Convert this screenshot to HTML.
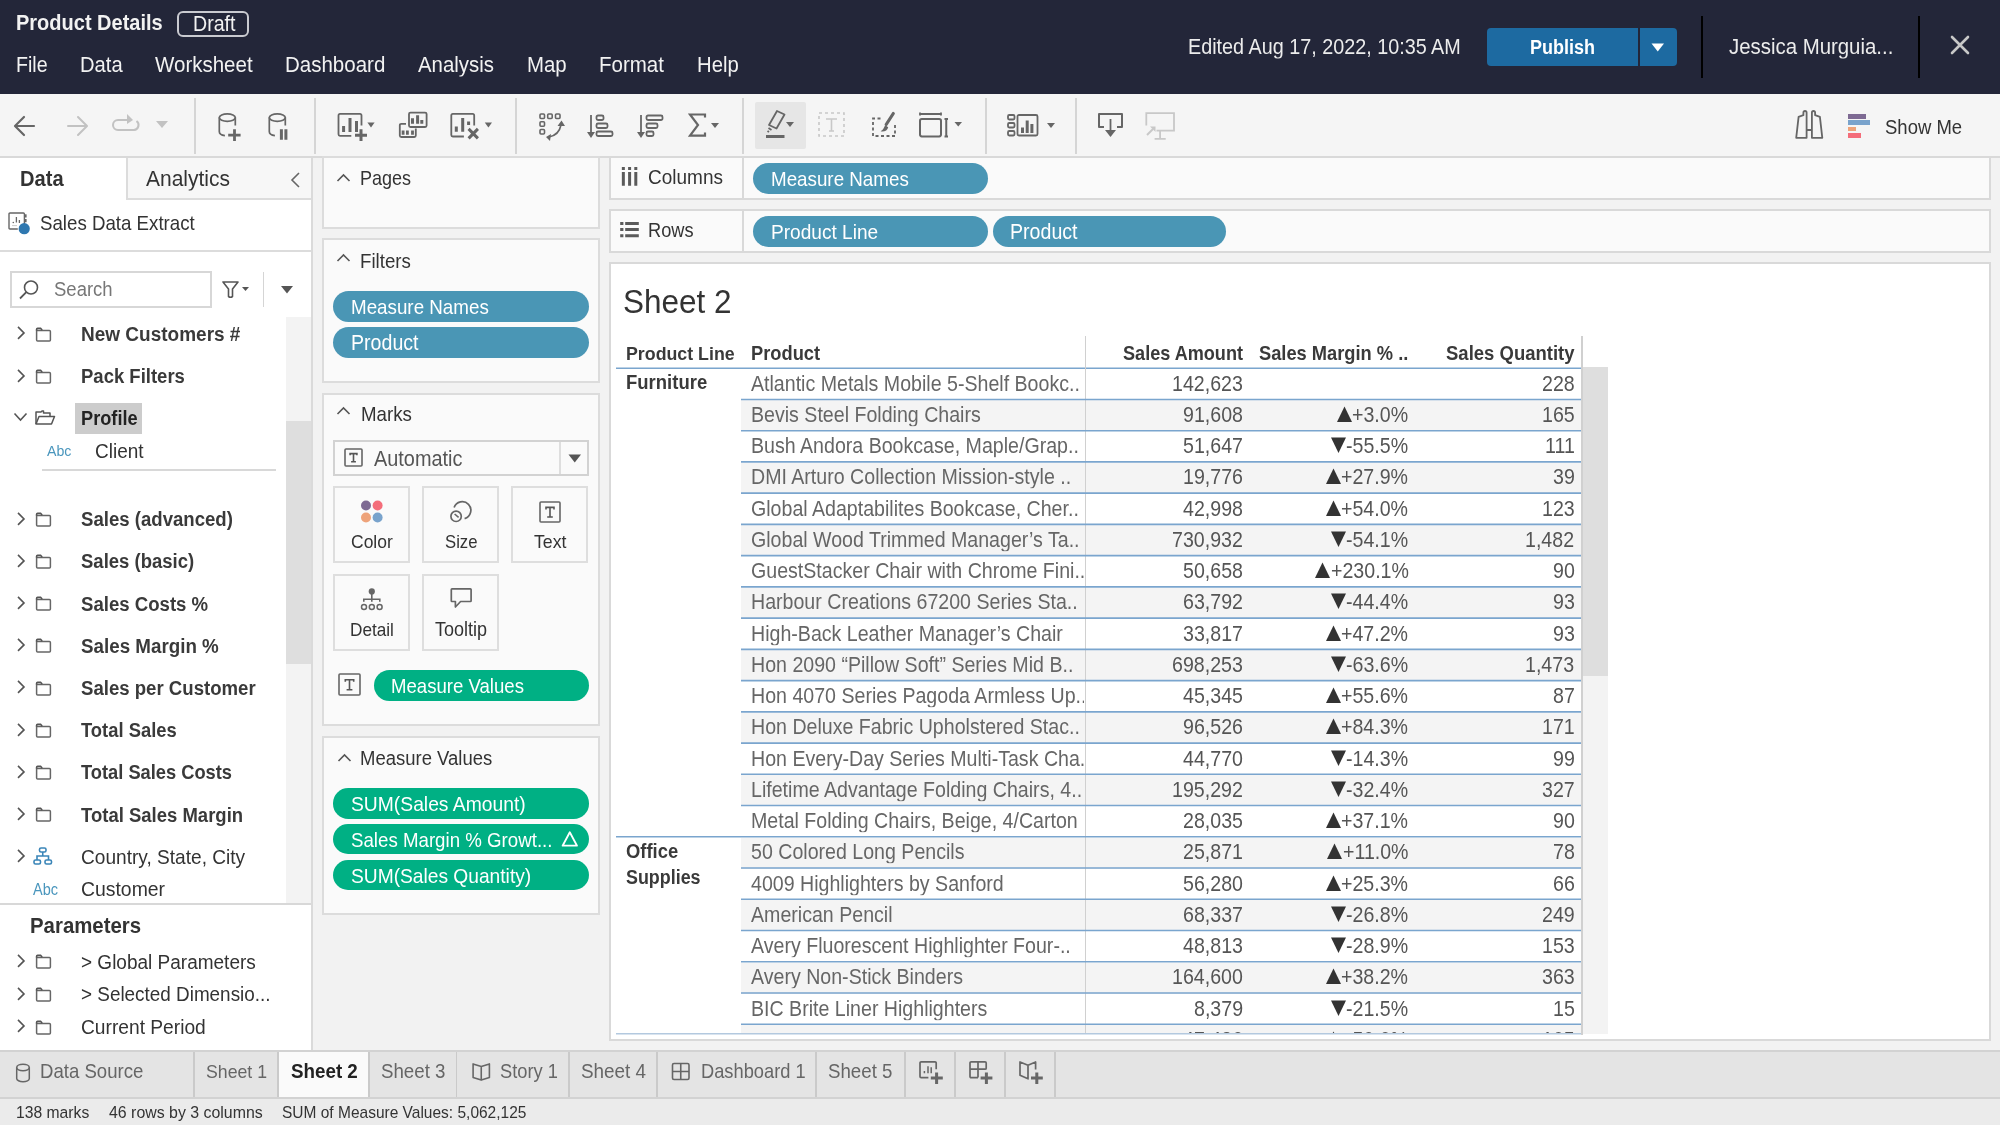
<!DOCTYPE html><html><head><meta charset="utf-8"><style>
html,body{margin:0;padding:0;}
body{width:2000px;height:1125px;overflow:hidden;position:relative;background:#f2f2f2;font-family:"Liberation Sans",sans-serif;}
.t{position:absolute;white-space:nowrap;line-height:1;will-change:transform;}
.r{position:absolute;}
</style></head><body>
<div class="r" style="left:0px;top:0px;width:2000px;height:94px;background:#232639;"></div>
<div class="t" style="top:13px;font-size:20.00px;color:#f2f2f2;transform:scaleY(1.08);transform-origin:0 16.93px;font-weight:700;left:16.00px;">Product Details</div>
<div class="r" style="left:177px;top:11px;width:72px;height:26px;border:2px solid #c9cad0;box-sizing:border-box;border-radius:6px;"></div>
<div class="t" style="top:15px;font-size:19.60px;color:#f2f2f2;transform:scaleY(1.08);transform-origin:0 16.60px;left:192.50px;">Draft</div>
<div class="t" style="top:56px;font-size:19.60px;color:#f2f2f2;transform:scaleY(1.08);transform-origin:0 16.60px;left:16.00px;">File</div>
<div class="t" style="top:55px;font-size:20.20px;color:#f2f2f2;transform:scaleY(1.08);transform-origin:0 17.10px;left:80.00px;">Data</div>
<div class="t" style="top:55px;font-size:20.50px;color:#f2f2f2;transform:scaleY(1.08);transform-origin:0 17.36px;left:155.00px;">Worksheet</div>
<div class="t" style="top:55px;font-size:20.50px;color:#f2f2f2;transform:scaleY(1.08);transform-origin:0 17.36px;left:285.30px;">Dashboard</div>
<div class="t" style="top:55px;font-size:20.40px;color:#f2f2f2;transform:scaleY(1.08);transform-origin:0 17.27px;left:418.00px;">Analysis</div>
<div class="t" style="top:55px;font-size:20.40px;color:#f2f2f2;transform:scaleY(1.08);transform-origin:0 17.27px;left:527.00px;">Map</div>
<div class="t" style="top:55px;font-size:20.50px;color:#f2f2f2;transform:scaleY(1.08);transform-origin:0 17.36px;left:599.00px;">Format</div>
<div class="t" style="top:55px;font-size:20.30px;color:#f2f2f2;transform:scaleY(1.08);transform-origin:0 17.19px;left:696.60px;">Help</div>
<div class="t" style="top:38px;font-size:19.80px;color:#ececec;transform:scaleY(1.08);transform-origin:0 16.76px;left:1188.00px;">Edited Aug 17, 2022, 10:35 AM</div>
<div class="r" style="left:1487px;top:28px;width:190px;height:38px;background:#1d6aa1;border-radius:4px;"></div>
<div class="r" style="left:1638px;top:28px;width:2px;height:38px;background:#232639;"></div>
<div class="t" style="top:39px;font-size:18.00px;color:#ffffff;transform:scaleY(1.08);transform-origin:0 15.24px;font-weight:700;left:1530.00px;">Publish</div>
<svg class="r" style="left:1651px;top:43px;" width="14" height="9" viewBox="0 0 14 9"><path d="M0.5 0.5 H13 L6.75 8.5 Z" fill="#fff"/></svg>
<div class="r" style="left:1701px;top:16px;width:2px;height:62px;background:#000;"></div>
<div class="t" style="top:37px;font-size:20.40px;color:#ececec;transform:scaleY(1.08);transform-origin:0 17.27px;left:1728.50px;">Jessica Murguia...</div>
<div class="r" style="left:1918px;top:16px;width:2px;height:62px;background:#000;"></div>
<svg class="r" style="left:1949px;top:34px;" width="22" height="22" viewBox="0 0 22 22"><path d="M3 3 L19 19 M19 3 L3 19" stroke="#c8c8c8" stroke-width="2.6" stroke-linecap="round"/></svg>
<div class="r" style="left:0px;top:94px;width:2000px;height:63px;background:#f5f5f5;"></div>
<div class="r" style="left:0px;top:156px;width:2000px;height:2px;background:#d9d9d9;"></div>
<div class="r" style="left:194px;top:98px;width:2px;height:56px;background:#d5d5d5;"></div>
<div class="r" style="left:314px;top:98px;width:2px;height:56px;background:#d5d5d5;"></div>
<div class="r" style="left:515px;top:98px;width:2px;height:56px;background:#d5d5d5;"></div>
<div class="r" style="left:742px;top:98px;width:2px;height:56px;background:#d5d5d5;"></div>
<div class="r" style="left:985px;top:98px;width:2px;height:56px;background:#d5d5d5;"></div>
<div class="r" style="left:1075px;top:98px;width:2px;height:56px;background:#d5d5d5;"></div>
<svg class="r" style="left:12px;top:114px;" width="26" height="24" viewBox="0 0 26 24"><path d="M4 12 H22 M12 3 L3 12 L12 21" stroke="#666" stroke-width="2.2" fill="none" stroke-linecap="round" stroke-linejoin="round"/></svg>
<svg class="r" style="left:64px;top:114px;" width="26" height="24" viewBox="0 0 26 24"><path d="M4 12 H22 M14 3 L23 12 L14 21" stroke="#c2c2c2" stroke-width="2" fill="none" stroke-linecap="round" stroke-linejoin="round"/></svg>
<svg class="r" style="left:109px;top:113px;" width="32" height="22" viewBox="0 0 32 22"><path d="M18 7 H9 A5 5 0 0 0 9 17 H25 A5 5 0 0 0 27.5 8" stroke="#c2c2c2" stroke-width="2" fill="none"/><path d="M18 1 L24 7 L18 11 Z" fill="#c2c2c2"/></svg>
<svg class="r" style="left:156px;top:121px;" width="12" height="7" viewBox="0 0 12 7"><path d="M0 0 H12 L6.0 7 Z" fill="#c2c2c2"/></svg>
<svg class="r" style="left:217px;top:112px;" width="26" height="30" viewBox="0 0 26 30"><ellipse cx="10.3" cy="5.6" rx="8" ry="3.7" fill="none" stroke="#666" stroke-width="1.7"/><path d="M2.3 5.6 V19.5 Q2.3 23 7.9 23.6 M18.3 5.6 V13.5" fill="none" stroke="#666" stroke-width="1.7"/><path d="M17.5 17.3 V29 M11.2 23.2 H23.6" stroke="#666" stroke-width="2.8"/></svg>
<svg class="r" style="left:267px;top:112px;" width="24" height="30" viewBox="0 0 24 30"><ellipse cx="10.3" cy="5.6" rx="8" ry="3.7" fill="none" stroke="#666" stroke-width="1.7"/><path d="M2.3 5.6 V19.5 Q2.3 23 7.9 23.6 M18.3 5.6 V13.5" fill="none" stroke="#666" stroke-width="1.7"/><path d="M14.4 17.3 V27.7 M18.9 17.3 V27.7" stroke="#666" stroke-width="3"/></svg>
<svg class="r" style="left:336px;top:112px;" width="42" height="30" viewBox="0 0 42 30"><path d="M25.5 13.4 V3.4 Q25.5 1.9 24 1.9 H4 Q2.5 1.9 2.5 3.4 V22.3 Q2.5 23.8 4 23.8 H15.3" fill="none" stroke="#666" stroke-width="1.8"/><path d="M7.6 20 V14 M14 20 V6 M20.5 20 V9" stroke="#666" stroke-width="3"/><path d="M25 17.2 V29.1 M19 23.2 H31" stroke="#666" stroke-width="3"/><path d="M31.4 10.4 H38.6 L35 15.5 Z" fill="#666"/></svg>
<svg class="r" style="left:397px;top:111px;" width="32" height="28" viewBox="0 0 32 28"><rect x="12" y="1.6" width="17.6" height="14.4" rx="1.5" fill="none" stroke="#666" stroke-width="1.8"/><path d="M15.5 12.7 V7.2 M20.6 12.7 V4.2 M24.8 12.7 V8.9" stroke="#666" stroke-width="3"/><path d="M9 12.8 H4.3 Q2.8 12.8 2.8 14.3 V24.5 Q2.8 26 4.3 26 H17.3 Q18.8 26 18.8 24.5 V17.5" fill="none" stroke="#666" stroke-width="1.8"/><path d="M6.1 23.8 V19.5 M10.4 23.8 V19.5 M15.5 23.8 V19.5" stroke="#666" stroke-width="2.8"/></svg>
<svg class="r" style="left:449px;top:112px;" width="44" height="30" viewBox="0 0 44 30"><path d="M25.2 13.4 V3.4 Q25.2 1.9 23.7 1.9 H3.8 Q2.3 1.9 2.3 3.4 V23 Q2.3 24.5 3.8 24.5 H14.9" fill="none" stroke="#666" stroke-width="1.8"/><path d="M7.3 19.8 V14.4 M13.7 19.8 V6 M19.6 13 V9.4" stroke="#666" stroke-width="3"/><path d="M19.6 16.9 L28.9 26.4 M28.9 16.9 L19.6 26.4" stroke="#666" stroke-width="3"/><path d="M35.8 10.4 H43 L39.4 15.5 Z" fill="#666"/></svg>
<svg class="r" style="left:539px;top:113px;" width="28" height="29" viewBox="0 0 28 29"><g fill="none" stroke="#666" stroke-width="1.6"><rect x="1" y="1" width="4.5" height="4.5" rx="1"/><rect x="8.7" y="1" width="4.5" height="4.5" rx="1"/><rect x="16.5" y="1" width="4.5" height="4.5" rx="1"/><rect x="1" y="8.8" width="4.5" height="4.5" rx="1"/><rect x="1" y="16.5" width="4.5" height="4.5" rx="1"/><path d="M10 24 Q20 22 22 12"/></g><path d="M18.5 13 L22.5 7.5 L26 13 Z M12 21 L7 24 L11 28 Z" fill="#666"/></svg>
<svg class="r" style="left:586px;top:114px;" width="30" height="26" viewBox="0 0 30 26"><path d="M5 1 V20" stroke="#666" stroke-width="1.8"/><path d="M1 18 H9 L5 24 Z" fill="#666"/><g fill="none" stroke="#666" stroke-width="1.8"><rect x="10.5" y="1.5" width="7" height="4.5" rx="1.5"/><rect x="10.5" y="9.5" width="11" height="4.5" rx="1.5"/><rect x="10.5" y="17.5" width="16" height="4.5" rx="1.5"/></g></svg>
<svg class="r" style="left:636px;top:114px;" width="30" height="26" viewBox="0 0 30 26"><path d="M5 1 V20" stroke="#666" stroke-width="1.8"/><path d="M1 18 H9 L5 24 Z" fill="#666"/><g fill="none" stroke="#666" stroke-width="1.8"><rect x="10.5" y="1.5" width="16" height="4.5" rx="1.5"/><rect x="10.5" y="9.5" width="11" height="4.5" rx="1.5"/><rect x="10.5" y="17.5" width="7" height="4.5" rx="1.5"/></g></svg>
<svg class="r" style="left:688px;top:112px;" width="32" height="27" viewBox="0 0 32 27"><path d="M17 5.5 V2.5 H2 L10 13 L2 23.6 H17 V20.6" fill="none" stroke="#666" stroke-width="2.2"/><path d="M23 11 H31 L27 16 Z" fill="#666"/></svg>
<div class="r" style="left:755px;top:102px;width:51px;height:47px;background:#e6e6e6;border-radius:2px;"></div>
<svg class="r" style="left:764px;top:109px;" width="32" height="31" viewBox="0 0 32 31"><path d="M12.5 19.5 L5 16 L13 2 L20.5 5.5 Z" fill="none" stroke="#666" stroke-width="1.8" stroke-linejoin="round"/><path d="M4.5 19 L7.5 21 M3.5 22 L5 23" stroke="#666" stroke-width="1.8"/><rect x="2" y="26" width="18.5" height="3" fill="#666"/><path d="M22 13 H30 L26 18 Z" fill="#666"/></svg>
<svg class="r" style="left:818px;top:112px;" width="28" height="26" viewBox="0 0 28 26"><rect x="1" y="1" width="25" height="23" fill="none" stroke="#c8c8c8" stroke-width="1.6" stroke-dasharray="3 3"/><path d="M8 7 H19 M13.5 7 V19 M11 19 H16" stroke="#c8c8c8" stroke-width="1.6" fill="none"/></svg>
<svg class="r" style="left:871px;top:111px;" width="26" height="28" viewBox="0 0 26 28"><path d="M9.5 7.5 H2 V25 H24 V12.5" fill="none" stroke="#666" stroke-width="1.8" stroke-dasharray="3 2.5"/><path d="M22.3 2.5 L15.2 13.5" stroke="#666" stroke-width="3.2" stroke-linecap="round"/><path d="M14.3 14.2 C12.8 16.2 12.6 18.6 9.6 20.2 C13 21 16.6 19.6 17.2 16.2 Z" fill="#666"/></svg>
<svg class="r" style="left:918px;top:110px;" width="46" height="29" viewBox="0 0 46 29"><path d="M2 2.5 V5.5 M2 4 H23 M23 2.5 V5.5" stroke="#666" stroke-width="1.8" fill="none"/><rect x="2" y="9" width="21" height="17.4" rx="1.8" fill="none" stroke="#666" stroke-width="2"/><path d="M26.5 9 H30 M28.25 9 V26.4 M26.5 26.4 H30" stroke="#666" stroke-width="2" fill="none"/><path d="M36.5 12 H44 L40.25 16.5 Z" fill="#666"/></svg>
<svg class="r" style="left:1007px;top:114px;" width="50" height="25" viewBox="0 0 50 25"><g fill="none" stroke="#666" stroke-width="1.8"><rect x="1" y="1" width="6.5" height="4.5" rx="1.2"/><rect x="1" y="9" width="6.5" height="4.5" rx="1.2"/><rect x="1" y="17" width="6.5" height="4.5" rx="1.2"/><rect x="10.5" y="1" width="20" height="20.5" rx="1.5"/></g><path d="M15.5 19V13.5 M20.2 19V6.5 M24.9 19V10" stroke="#666" stroke-width="3"/><path d="M40 9 H48 L44 14 Z" fill="#666"/></svg>
<svg class="r" style="left:1097px;top:112px;" width="27" height="27" viewBox="0 0 27 27"><path d="M7 15 H2 V2 H25 V15 H20" fill="none" stroke="#666" stroke-width="2" stroke-linejoin="round"/><path d="M13.5 7 V22" stroke="#666" stroke-width="1.8"/><path d="M8 18 H19 L13.5 25 Z" fill="#666"/></svg>
<svg class="r" style="left:1145px;top:111px;" width="32" height="31" viewBox="0 0 32 31"><path d="M1.3 14.4 V2.1 H29 V19.6 H11.5" fill="none" stroke="#c8c8c8" stroke-width="1.8"/><path d="M15.1 19.6 V27.9 M9.6 27.9 H20.7" fill="none" stroke="#c8c8c8" stroke-width="1.8"/><path d="M2 24 L8 18" stroke="#c8c8c8" stroke-width="2"/><path d="M5 15.5 H10.5 V21 Z" fill="#c8c8c8"/></svg>
<svg class="r" style="left:1794px;top:110px;" width="31" height="31" viewBox="0 0 31 31"><path d="M2.2 27.8 L4.6 6.8 L9.4 5.2 V2.6 Q9.4 1 11 1 Q12.6 1 12.6 2.6 V27.8 Z M28.3 27.8 L25.9 6.8 L21.1 5.2 V2.6 Q21.1 1 19.5 1 Q17.9 1 17.9 2.6 V27.8 Z M12.6 20 H17.9" fill="none" stroke="#666" stroke-width="1.8" stroke-linejoin="round"/></svg>
<div class="r" style="left:1848px;top:114px;width:18px;height:5px;background:#7e6a93;"></div>
<div class="r" style="left:1848px;top:120px;width:22px;height:5px;background:#79a3cc;"></div>
<div class="r" style="left:1848px;top:127px;width:8px;height:4px;background:#eea37a;"></div>
<div class="r" style="left:1848px;top:133px;width:13px;height:5px;background:#f46d7a;"></div>
<div class="t" style="top:119px;font-size:18.50px;color:#333;transform:scaleY(1.08);transform-origin:0 15.66px;left:1885.00px;">Show Me</div>
<div class="r" style="left:0px;top:158px;width:311px;height:892px;background:#ffffff;"></div>
<div class="r" style="left:311px;top:158px;width:2px;height:892px;background:#dadada;"></div>
<div class="r" style="left:126px;top:158px;width:185px;height:42px;background:#f7f7f7;"></div>
<div class="r" style="left:126px;top:158px;width:2px;height:42px;background:#dcdcdc;"></div>
<div class="r" style="left:126px;top:198px;width:185px;height:2px;background:#dcdcdc;"></div>
<div class="t" style="top:169px;font-size:20.10px;color:#333;transform:scaleY(1.08);transform-origin:0 17.02px;font-weight:700;left:19.80px;">Data</div>
<div class="t" style="top:168px;font-size:21.00px;color:#333;transform:scaleY(1.08);transform-origin:0 17.78px;left:146.00px;">Analytics</div>
<svg class="r" style="left:289px;top:171px;" width="12" height="18" viewBox="0 0 12 18"><path d="M10 2 L3 9 L10 16" fill="none" stroke="#666" stroke-width="1.6"/></svg>
<svg class="r" style="left:7px;top:211px;" width="26" height="26" viewBox="0 0 26 26"><path d="M10.8 18 H3 Q2 18 2 17 V3 Q2 2 3 2 H16.4 Q17.4 2 17.4 3 V13" fill="none" stroke="#666" stroke-width="1.4"/><rect x="17.2" y="3.3" width="2.4" height="3.2" fill="#666"/><rect x="17.2" y="8" width="2.4" height="3.2" fill="#666"/><circle cx="6.3" cy="11.5" r="0.8" fill="#666"/><path d="M9.4 6 V11.6 M12.4 9 V12" stroke="#666" stroke-width="1.3"/><path d="M5 14.6 H10" stroke="#ccc" stroke-width="1"/><circle cx="17.2" cy="17.7" r="5.6" fill="#2f78b0"/></svg>
<div class="t" style="top:215px;font-size:18.70px;color:#333;transform:scaleY(1.08);transform-origin:0 15.83px;left:40.00px;">Sales Data Extract</div>
<div class="r" style="left:0px;top:250px;width:311px;height:2px;background:#dcdcdc;"></div>
<div class="r" style="left:10px;top:271px;width:202px;height:37px;background:#fff;border:2px solid #d7d7d7;box-sizing:border-box;"></div>
<svg class="r" style="left:18px;top:279px;" width="22" height="22" viewBox="0 0 22 22"><circle cx="13" cy="8.5" r="6.5" fill="none" stroke="#555" stroke-width="1.6"/><path d="M8.3 13.2 L2 19.5" stroke="#555" stroke-width="1.8"/></svg>
<div class="t" style="top:281px;font-size:18.50px;color:#777;transform:scaleY(1.08);transform-origin:0 15.66px;left:54.00px;">Search</div>
<svg class="r" style="left:221px;top:280px;" width="30" height="19" viewBox="0 0 30 19"><path d="M2 2 H17 L11.5 9 V16.5 Q9.5 18 7.5 16.5 V9 Z" fill="none" stroke="#555" stroke-width="1.6" stroke-linejoin="round"/><path d="M21 7 H28 L24.5 11 Z" fill="#555"/></svg>
<div class="r" style="left:262.5px;top:272px;width:1.5px;height:35px;background:#d5d5d5;"></div>
<svg class="r" style="left:281px;top:286px;" width="13" height="8" viewBox="0 0 13 8"><path d="M0 0 H12 L6 7.5 Z" fill="#555"/></svg>
<div class="r" style="left:286px;top:317px;width:25px;height:586px;background:#f3f3f3;"></div>
<div class="r" style="left:286px;top:421px;width:25px;height:243px;background:#dedede;"></div>
<svg class="r" style="left:16px;top:326.3px;" width="11" height="16" viewBox="0 0 11 16"><path d="M2 0.9 L8 6.9 L2 12.9" fill="none" stroke="#555" stroke-width="1.6"/></svg>
<svg class="r" style="left:35px;top:326.5px;" width="18" height="16" viewBox="0 0 18 16"><path d="M1.6 3.4 V13 Q1.6 14 2.6 14 H14.4 Q15.4 14 15.4 13 V4.4 Q15.4 3.4 14.4 3.4 Z" fill="none" stroke="#666" stroke-width="1.5"/><path d="M1.6 3.4 V2.4 Q1.6 1.4 2.6 1.4 H5.6 L7.2 3" fill="none" stroke="#555" stroke-width="1.6"/></svg>
<div class="t" style="top:325px;font-size:19.00px;color:#3a3a3a;transform:scaleY(1.08);transform-origin:0 16.09px;font-weight:700;left:80.80px;">New Customers #</div>
<svg class="r" style="left:16px;top:368.6px;" width="11" height="16" viewBox="0 0 11 16"><path d="M2 0.9 L8 6.9 L2 12.9" fill="none" stroke="#555" stroke-width="1.6"/></svg>
<svg class="r" style="left:35px;top:368.8px;" width="18" height="16" viewBox="0 0 18 16"><path d="M1.6 3.4 V13 Q1.6 14 2.6 14 H14.4 Q15.4 14 15.4 13 V4.4 Q15.4 3.4 14.4 3.4 Z" fill="none" stroke="#666" stroke-width="1.5"/><path d="M1.6 3.4 V2.4 Q1.6 1.4 2.6 1.4 H5.6 L7.2 3" fill="none" stroke="#555" stroke-width="1.6"/></svg>
<div class="t" style="top:368px;font-size:18.50px;color:#3a3a3a;transform:scaleY(1.08);transform-origin:0 15.66px;font-weight:700;left:80.80px;">Pack Filters</div>
<svg class="r" style="left:13px;top:412px;" width="16" height="11" viewBox="0 0 16 11"><path d="M1.5 1.5 L7.5 8 L13.5 1.5" fill="none" stroke="#555" stroke-width="1.6"/></svg>
<svg class="r" style="left:35px;top:410px;" width="21" height="17" viewBox="0 0 21 17"><path d="M1 14 V2 H6 L7 1 H8.5 V3 H15 V6" fill="none" stroke="#555" stroke-width="1.5" stroke-linejoin="round"/><path d="M1 14 L4 6.5 H19.5 L16.5 14 Z" fill="none" stroke="#555" stroke-width="1.5" stroke-linejoin="round"/></svg>
<div class="r" style="left:75px;top:403px;width:67px;height:31px;background:#cccccc;"></div>
<div class="t" style="top:410px;font-size:18.20px;color:#222;transform:scaleY(1.08);transform-origin:0 15.41px;font-weight:700;left:80.80px;">Profile</div>
<div class="t" style="top:444px;font-size:14.20px;color:#4a96bd;transform:scaleY(1.08);transform-origin:0 12.02px;left:47.30px;">Abc</div>
<div class="t" style="top:442px;font-size:19.00px;color:#333;transform:scaleY(1.08);transform-origin:0 16.09px;left:94.70px;">Client</div>
<div class="r" style="left:42px;top:469px;width:234px;height:2px;background:#d8d8d8;"></div>
<svg class="r" style="left:16px;top:511.59999999999997px;" width="11" height="16" viewBox="0 0 11 16"><path d="M2 0.9 L8 6.9 L2 12.9" fill="none" stroke="#555" stroke-width="1.6"/></svg>
<svg class="r" style="left:35px;top:511.79999999999995px;" width="18" height="16" viewBox="0 0 18 16"><path d="M1.6 3.4 V13 Q1.6 14 2.6 14 H14.4 Q15.4 14 15.4 13 V4.4 Q15.4 3.4 14.4 3.4 Z" fill="none" stroke="#666" stroke-width="1.5"/><path d="M1.6 3.4 V2.4 Q1.6 1.4 2.6 1.4 H5.6 L7.2 3" fill="none" stroke="#555" stroke-width="1.6"/></svg>
<div class="t" style="top:511px;font-size:18.60px;color:#3a3a3a;transform:scaleY(1.08);transform-origin:0 15.75px;font-weight:700;left:80.80px;">Sales (advanced)</div>
<svg class="r" style="left:16px;top:553.8px;" width="11" height="16" viewBox="0 0 11 16"><path d="M2 0.9 L8 6.9 L2 12.9" fill="none" stroke="#555" stroke-width="1.6"/></svg>
<svg class="r" style="left:35px;top:554.0px;" width="18" height="16" viewBox="0 0 18 16"><path d="M1.6 3.4 V13 Q1.6 14 2.6 14 H14.4 Q15.4 14 15.4 13 V4.4 Q15.4 3.4 14.4 3.4 Z" fill="none" stroke="#666" stroke-width="1.5"/><path d="M1.6 3.4 V2.4 Q1.6 1.4 2.6 1.4 H5.6 L7.2 3" fill="none" stroke="#555" stroke-width="1.6"/></svg>
<div class="t" style="top:553px;font-size:18.50px;color:#3a3a3a;transform:scaleY(1.08);transform-origin:0 15.66px;font-weight:700;left:80.80px;">Sales (basic)</div>
<svg class="r" style="left:16px;top:596.0999999999999px;" width="11" height="16" viewBox="0 0 11 16"><path d="M2 0.9 L8 6.9 L2 12.9" fill="none" stroke="#555" stroke-width="1.6"/></svg>
<svg class="r" style="left:35px;top:596.3px;" width="18" height="16" viewBox="0 0 18 16"><path d="M1.6 3.4 V13 Q1.6 14 2.6 14 H14.4 Q15.4 14 15.4 13 V4.4 Q15.4 3.4 14.4 3.4 Z" fill="none" stroke="#666" stroke-width="1.5"/><path d="M1.6 3.4 V2.4 Q1.6 1.4 2.6 1.4 H5.6 L7.2 3" fill="none" stroke="#555" stroke-width="1.6"/></svg>
<div class="t" style="top:596px;font-size:18.60px;color:#3a3a3a;transform:scaleY(1.08);transform-origin:0 15.75px;font-weight:700;left:80.80px;">Sales Costs %</div>
<svg class="r" style="left:16px;top:638.0999999999999px;" width="11" height="16" viewBox="0 0 11 16"><path d="M2 0.9 L8 6.9 L2 12.9" fill="none" stroke="#555" stroke-width="1.6"/></svg>
<svg class="r" style="left:35px;top:638.3px;" width="18" height="16" viewBox="0 0 18 16"><path d="M1.6 3.4 V13 Q1.6 14 2.6 14 H14.4 Q15.4 14 15.4 13 V4.4 Q15.4 3.4 14.4 3.4 Z" fill="none" stroke="#666" stroke-width="1.5"/><path d="M1.6 3.4 V2.4 Q1.6 1.4 2.6 1.4 H5.6 L7.2 3" fill="none" stroke="#555" stroke-width="1.6"/></svg>
<div class="t" style="top:638px;font-size:18.80px;color:#3a3a3a;transform:scaleY(1.08);transform-origin:0 15.92px;font-weight:700;left:80.80px;">Sales Margin %</div>
<svg class="r" style="left:16px;top:680.3px;" width="11" height="16" viewBox="0 0 11 16"><path d="M2 0.9 L8 6.9 L2 12.9" fill="none" stroke="#555" stroke-width="1.6"/></svg>
<svg class="r" style="left:35px;top:680.5px;" width="18" height="16" viewBox="0 0 18 16"><path d="M1.6 3.4 V13 Q1.6 14 2.6 14 H14.4 Q15.4 14 15.4 13 V4.4 Q15.4 3.4 14.4 3.4 Z" fill="none" stroke="#666" stroke-width="1.5"/><path d="M1.6 3.4 V2.4 Q1.6 1.4 2.6 1.4 H5.6 L7.2 3" fill="none" stroke="#555" stroke-width="1.6"/></svg>
<div class="t" style="top:680px;font-size:18.60px;color:#3a3a3a;transform:scaleY(1.08);transform-origin:0 15.75px;font-weight:700;left:80.80px;">Sales per Customer</div>
<svg class="r" style="left:16px;top:722.5px;" width="11" height="16" viewBox="0 0 11 16"><path d="M2 0.9 L8 6.9 L2 12.9" fill="none" stroke="#555" stroke-width="1.6"/></svg>
<svg class="r" style="left:35px;top:722.7px;" width="18" height="16" viewBox="0 0 18 16"><path d="M1.6 3.4 V13 Q1.6 14 2.6 14 H14.4 Q15.4 14 15.4 13 V4.4 Q15.4 3.4 14.4 3.4 Z" fill="none" stroke="#666" stroke-width="1.5"/><path d="M1.6 3.4 V2.4 Q1.6 1.4 2.6 1.4 H5.6 L7.2 3" fill="none" stroke="#555" stroke-width="1.6"/></svg>
<div class="t" style="top:722px;font-size:18.40px;color:#3a3a3a;transform:scaleY(1.08);transform-origin:0 15.58px;font-weight:700;left:80.80px;">Total Sales</div>
<svg class="r" style="left:16px;top:764.6999999999999px;" width="11" height="16" viewBox="0 0 11 16"><path d="M2 0.9 L8 6.9 L2 12.9" fill="none" stroke="#555" stroke-width="1.6"/></svg>
<svg class="r" style="left:35px;top:764.9px;" width="18" height="16" viewBox="0 0 18 16"><path d="M1.6 3.4 V13 Q1.6 14 2.6 14 H14.4 Q15.4 14 15.4 13 V4.4 Q15.4 3.4 14.4 3.4 Z" fill="none" stroke="#666" stroke-width="1.5"/><path d="M1.6 3.4 V2.4 Q1.6 1.4 2.6 1.4 H5.6 L7.2 3" fill="none" stroke="#555" stroke-width="1.6"/></svg>
<div class="t" style="top:764px;font-size:18.30px;color:#3a3a3a;transform:scaleY(1.08);transform-origin:0 15.49px;font-weight:700;left:80.80px;">Total Sales Costs</div>
<svg class="r" style="left:16px;top:807.0px;" width="11" height="16" viewBox="0 0 11 16"><path d="M2 0.9 L8 6.9 L2 12.9" fill="none" stroke="#555" stroke-width="1.6"/></svg>
<svg class="r" style="left:35px;top:807.2px;" width="18" height="16" viewBox="0 0 18 16"><path d="M1.6 3.4 V13 Q1.6 14 2.6 14 H14.4 Q15.4 14 15.4 13 V4.4 Q15.4 3.4 14.4 3.4 Z" fill="none" stroke="#666" stroke-width="1.5"/><path d="M1.6 3.4 V2.4 Q1.6 1.4 2.6 1.4 H5.6 L7.2 3" fill="none" stroke="#555" stroke-width="1.6"/></svg>
<div class="t" style="top:807px;font-size:18.50px;color:#3a3a3a;transform:scaleY(1.08);transform-origin:0 15.66px;font-weight:700;left:80.80px;">Total Sales Margin</div>
<svg class="r" style="left:16px;top:849.1999999999999px;" width="11" height="16" viewBox="0 0 11 16"><path d="M2 0.9 L8 6.9 L2 12.9" fill="none" stroke="#555" stroke-width="1.6"/></svg>
<svg class="r" style="left:33px;top:846.9px;" width="20" height="19" viewBox="0 0 20 19"><g fill="none" stroke="#3a85b8" stroke-width="1.6"><rect x="6.5" y="1" width="6.5" height="4" rx="1.5"/><path d="M9.75 5 V9 M4 13 V9 H15.5 V13"/><rect x="1" y="13" width="6.5" height="4" rx="1.5"/><rect x="12" y="13" width="6.5" height="4" rx="1.5"/></g></svg>
<div class="t" style="top:848px;font-size:19.10px;color:#333;transform:scaleY(1.08);transform-origin:0 16.17px;left:80.80px;">Country, State, City</div>
<div class="t" style="top:883px;font-size:14.50px;color:#4a96bd;transform:scaleY(1.08);transform-origin:0 12.28px;left:33.00px;">Abc</div>
<div class="t" style="top:880px;font-size:19.40px;color:#333;transform:scaleY(1.08);transform-origin:0 16.43px;left:80.80px;">Customer</div>
<div class="r" style="left:0px;top:903px;width:311px;height:2px;background:#d8d8d8;"></div>
<div class="t" style="top:916px;font-size:20.40px;color:#333;transform:scaleY(1.08);transform-origin:0 17.27px;font-weight:700;left:29.50px;">Parameters</div>
<svg class="r" style="left:16px;top:954.0999999999999px;" width="11" height="16" viewBox="0 0 11 16"><path d="M2 0.9 L8 6.9 L2 12.9" fill="none" stroke="#555" stroke-width="1.6"/></svg>
<svg class="r" style="left:35px;top:954.3px;" width="18" height="16" viewBox="0 0 18 16"><path d="M1.6 3.4 V13 Q1.6 14 2.6 14 H14.4 Q15.4 14 15.4 13 V4.4 Q15.4 3.4 14.4 3.4 Z" fill="none" stroke="#666" stroke-width="1.5"/><path d="M1.6 3.4 V2.4 Q1.6 1.4 2.6 1.4 H5.6 L7.2 3" fill="none" stroke="#555" stroke-width="1.6"/></svg>
<div class="t" style="top:953px;font-size:19.00px;color:#333;transform:scaleY(1.08);transform-origin:0 16.09px;left:80.80px;">&gt; Global Parameters</div>
<svg class="r" style="left:16px;top:986.6999999999999px;" width="11" height="16" viewBox="0 0 11 16"><path d="M2 0.9 L8 6.9 L2 12.9" fill="none" stroke="#555" stroke-width="1.6"/></svg>
<svg class="r" style="left:35px;top:986.9px;" width="18" height="16" viewBox="0 0 18 16"><path d="M1.6 3.4 V13 Q1.6 14 2.6 14 H14.4 Q15.4 14 15.4 13 V4.4 Q15.4 3.4 14.4 3.4 Z" fill="none" stroke="#666" stroke-width="1.5"/><path d="M1.6 3.4 V2.4 Q1.6 1.4 2.6 1.4 H5.6 L7.2 3" fill="none" stroke="#555" stroke-width="1.6"/></svg>
<div class="t" style="top:986px;font-size:18.90px;color:#333;transform:scaleY(1.08);transform-origin:0 16.00px;left:80.80px;">&gt; Selected Dimensio...</div>
<svg class="r" style="left:16px;top:1019.3px;" width="11" height="16" viewBox="0 0 11 16"><path d="M2 0.9 L8 6.9 L2 12.9" fill="none" stroke="#555" stroke-width="1.6"/></svg>
<svg class="r" style="left:35px;top:1019.5px;" width="18" height="16" viewBox="0 0 18 16"><path d="M1.6 3.4 V13 Q1.6 14 2.6 14 H14.4 Q15.4 14 15.4 13 V4.4 Q15.4 3.4 14.4 3.4 Z" fill="none" stroke="#666" stroke-width="1.5"/><path d="M1.6 3.4 V2.4 Q1.6 1.4 2.6 1.4 H5.6 L7.2 3" fill="none" stroke="#555" stroke-width="1.6"/></svg>
<div class="t" style="top:1018px;font-size:19.20px;color:#333;transform:scaleY(1.08);transform-origin:0 16.26px;left:80.80px;">Current Period</div>
<div class="r" style="left:322px;top:156px;width:278px;height:73px;background:#fafafa;border:2px solid #dcdcdc;box-sizing:border-box;"></div>
<svg class="r" style="left:336px;top:173px;" width="15" height="10" viewBox="0 0 15 10"><path d="M1.5 8 L7.5 2 L13.5 8" fill="none" stroke="#555" stroke-width="1.6"/></svg>
<div class="t" style="top:170px;font-size:18.00px;color:#333;transform:scaleY(1.08);transform-origin:0 15.24px;left:360.00px;">Pages</div>
<div class="r" style="left:322px;top:238px;width:278px;height:145px;background:#fafafa;border:2px solid #dcdcdc;box-sizing:border-box;"></div>
<svg class="r" style="left:336px;top:253px;" width="15" height="10" viewBox="0 0 15 10"><path d="M1.5 8 L7.5 2 L13.5 8" fill="none" stroke="#555" stroke-width="1.6"/></svg>
<div class="t" style="top:253px;font-size:18.70px;color:#333;transform:scaleY(1.08);transform-origin:0 15.83px;left:360.00px;">Filters</div>
<div class="r" style="left:333px;top:290.5px;width:256px;height:31.19999999999999px;background:#4a96b5;border-radius:15.599999999999994px;"></div>
<div class="t" style="top:299px;font-size:18.80px;color:#ffffff;transform:scaleY(1.08);transform-origin:0 15.92px;left:350.70px;">Measure Names</div>
<div class="r" style="left:333px;top:326.8px;width:256px;height:30.899999999999977px;background:#4a96b5;border-radius:15.449999999999989px;"></div>
<div class="t" style="top:334px;font-size:19.60px;color:#ffffff;transform:scaleY(1.08);transform-origin:0 16.60px;left:350.70px;">Product</div>
<div class="r" style="left:322px;top:393px;width:278px;height:333px;background:#fafafa;border:2px solid #dcdcdc;box-sizing:border-box;"></div>
<svg class="r" style="left:336px;top:406px;" width="15" height="10" viewBox="0 0 15 10"><path d="M1.5 8 L7.5 2 L13.5 8" fill="none" stroke="#555" stroke-width="1.6"/></svg>
<div class="t" style="top:406px;font-size:18.70px;color:#333;transform:scaleY(1.08);transform-origin:0 15.83px;left:360.60px;">Marks</div>
<div class="r" style="left:333px;top:440px;width:256px;height:36px;background:#fafafa;border:2px solid #d2d2d2;box-sizing:border-box;"></div>
<div class="r" style="left:559px;top:442px;width:1.5px;height:32px;background:#dedede;"></div>
<svg class="r" style="left:568px;top:454px;" width="14" height="9" viewBox="0 0 14 9"><path d="M0.5 0.5 H13 L6.75 8.5 Z" fill="#555"/></svg>
<svg class="r" style="left:343.5px;top:448px;" width="19" height="19" viewBox="0 0 19 19"><rect x="1" y="1" width="17" height="17" rx="1" fill="none" stroke="#666" stroke-width="1.6"/><path d="M6.1 7.3 V5.6 H12.9 V7.3 M9.5 5.6 V13.8 M7.1 13.8 H11.9" fill="none" stroke="#555" stroke-width="1.6"/></svg>
<div class="t" style="top:450px;font-size:19.90px;color:#555;transform:scaleY(1.08);transform-origin:0 16.85px;left:374.40px;">Automatic</div>
<div class="r" style="left:333.0px;top:485.5px;width:77.0px;height:77.0px;background:#fafafa;border:2px solid #dedede;box-sizing:border-box;"></div>
<div class="t" style="top:534px;font-size:17.50px;color:#333;transform:scaleY(1.08);transform-origin:0 14.82px;left:351.00px;">Color</div>
<div class="r" style="left:422.0px;top:485.5px;width:77.0px;height:77.0px;background:#fafafa;border:2px solid #dedede;box-sizing:border-box;"></div>
<div class="t" style="top:535px;font-size:16.70px;color:#333;transform:scaleY(1.08);transform-origin:0 14.14px;left:445.00px;">Size</div>
<div class="r" style="left:511.0px;top:485.5px;width:77.0px;height:77.0px;background:#fafafa;border:2px solid #dedede;box-sizing:border-box;"></div>
<div class="t" style="top:534px;font-size:17.70px;color:#333;transform:scaleY(1.08);transform-origin:0 14.99px;left:533.60px;">Text</div>
<div class="r" style="left:333.0px;top:573.5px;width:77.0px;height:77.0px;background:#fafafa;border:2px solid #dedede;box-sizing:border-box;"></div>
<div class="t" style="top:622px;font-size:17.20px;color:#333;transform:scaleY(1.08);transform-origin:0 14.56px;left:349.80px;">Detail</div>
<div class="r" style="left:422.0px;top:573.5px;width:77.0px;height:77.0px;background:#fafafa;border:2px solid #dedede;box-sizing:border-box;"></div>
<div class="t" style="top:621px;font-size:18.00px;color:#333;transform:scaleY(1.08);transform-origin:0 15.24px;left:434.50px;">Tooltip</div>
<svg class="r" style="left:359px;top:498px;" width="26" height="26" viewBox="0 0 26 26"><circle cx="7" cy="7.5" r="5" fill="#7e6a93"/><circle cx="18.6" cy="7.5" r="5" fill="#f46d7a"/><circle cx="7" cy="19.5" r="5" fill="#eea37a"/><circle cx="18.6" cy="19.5" r="5" fill="#79a3cc"/></svg>
<svg class="r" style="left:449px;top:500px;" width="25" height="25" viewBox="0 0 25 25"><path d="M5.1 7.6 A8.6 8.6 0 1 1 15.6 18.6" fill="none" stroke="#666" stroke-width="1.7"/><circle cx="7.1" cy="16.3" r="5.2" fill="none" stroke="#666" stroke-width="1.7"/><path d="M5.6 14 L9.6 17.4" stroke="#666" stroke-width="1.6"/></svg>
<svg class="r" style="left:539px;top:501px;" width="22" height="22" viewBox="0 0 22 22"><rect x="1" y="1" width="20" height="20" rx="1" fill="none" stroke="#666" stroke-width="1.6"/><path d="M7.0 8.4 V6.4 H15.0 V8.4 M11.0 6.4 V16.0 M8.2 16.0 H13.8" fill="none" stroke="#555" stroke-width="1.6"/></svg>
<svg class="r" style="left:359px;top:586px;" width="26" height="26" viewBox="0 0 26 26"><circle cx="12.8" cy="5.4" r="3.1" fill="#666"/><path d="M12.8 8 V15.8 M4.8 15.8 V13.2 H20.8 V15.8" fill="none" stroke="#666" stroke-width="1.6"/><circle cx="5" cy="21" r="2.5" fill="none" stroke="#666" stroke-width="1.5"/><circle cx="12.8" cy="21" r="2.5" fill="none" stroke="#666" stroke-width="1.5"/><circle cx="20.6" cy="21" r="2.5" fill="none" stroke="#666" stroke-width="1.5"/></svg>
<svg class="r" style="left:449px;top:587px;" width="25" height="24" viewBox="0 0 25 24"><path d="M2.3 2.6 Q2.3 1.9 3 1.9 H21.4 Q22.1 1.9 22.1 2.6 V13.8 Q22.1 14.5 21.4 14.5 H11.6 L6.4 20 V14.5 H3 Q2.3 14.5 2.3 13.8 Z" fill="none" stroke="#666" stroke-width="1.7" stroke-linejoin="round"/></svg>
<svg class="r" style="left:338px;top:673px;" width="23" height="23" viewBox="0 0 23 23"><rect x="1" y="1" width="21" height="21" rx="1" fill="none" stroke="#666" stroke-width="1.6"/><path d="M7.3 8.8 V6.7 H15.7 V8.8 M11.5 6.7 V16.8 M8.6 16.8 H14.4" fill="none" stroke="#555" stroke-width="1.6"/></svg>
<div class="r" style="left:373.6px;top:669.6px;width:215.69999999999993px;height:31.199999999999932px;background:#00b084;border-radius:15.599999999999966px;"></div>
<div class="t" style="top:678px;font-size:18.60px;color:#ffffff;transform:scaleY(1.08);transform-origin:0 15.75px;left:391.20px;">Measure Values</div>
<div class="r" style="left:322px;top:736px;width:278px;height:179px;background:#fafafa;border:2px solid #dcdcdc;box-sizing:border-box;"></div>
<svg class="r" style="left:336.5px;top:752.5px;" width="15" height="10" viewBox="0 0 15 10"><path d="M1.5 8 L7.5 2 L13.5 8" fill="none" stroke="#555" stroke-width="1.6"/></svg>
<div class="t" style="top:750px;font-size:18.50px;color:#333;transform:scaleY(1.08);transform-origin:0 15.66px;left:360.00px;">Measure Values</div>
<div class="r" style="left:333px;top:788px;width:256px;height:30.5px;background:#00b084;border-radius:15.25px;"></div>
<div class="t" style="top:795px;font-size:19.30px;color:#ffffff;transform:scaleY(1.08);transform-origin:0 16.34px;left:350.60px;">SUM(Sales Amount)</div>
<div class="r" style="left:333px;top:823.7px;width:256px;height:30.699999999999932px;background:#00b084;border-radius:15.349999999999966px;"></div>
<div class="t" style="top:832px;font-size:18.70px;color:#ffffff;transform:scaleY(1.08);transform-origin:0 15.83px;left:350.60px;">Sales Margin % Growt...</div>
<svg class="r" style="left:560px;top:830px;" width="20" height="18" viewBox="0 0 20 18"><path d="M9.8 2.3 L17 15.7 H2.6 Z" fill="none" stroke="#fff" stroke-width="1.8" stroke-linejoin="round"/></svg>
<div class="r" style="left:333px;top:859.8px;width:256px;height:30.700000000000045px;background:#00b084;border-radius:15.350000000000023px;"></div>
<div class="t" style="top:867px;font-size:19.20px;color:#ffffff;transform:scaleY(1.08);transform-origin:0 16.26px;left:350.60px;">SUM(Sales Quantity)</div>
<div class="r" style="left:609px;top:156px;width:1382px;height:44px;background:#fafafa;border:2px solid #d9d9d9;box-sizing:border-box;"></div>
<div class="r" style="left:742px;top:158px;width:2px;height:40px;background:#d9d9d9;"></div>
<div class="r" style="left:609px;top:209px;width:1382px;height:44px;background:#fafafa;border:2px solid #d9d9d9;box-sizing:border-box;"></div>
<div class="r" style="left:742px;top:211px;width:2px;height:40px;background:#d9d9d9;"></div>
<svg class="r" style="left:620px;top:166px;" width="20" height="21" viewBox="0 0 20 21"><path d="M3.35 6.1V19.8 M9.6 6.1V19.8 M15.8 6.1V19.8 M3.35 1V4.1 M9.6 1V4.1 M15.8 1V4.1" stroke="#5a5a5a" stroke-width="3"/></svg>
<div class="t" style="top:168px;font-size:19.00px;color:#333;transform:scaleY(1.08);transform-origin:0 16.09px;left:647.60px;">Columns</div>
<svg class="r" style="left:619px;top:221px;" width="21" height="18" viewBox="0 0 21 18"><path d="M1.2 2.4H4.4 M1.2 8.6H4.4 M1.2 14.8H4.4 M6.2 2.4H19.8 M6.2 8.6H19.8 M6.2 14.8H19.8" stroke="#5a5a5a" stroke-width="3"/></svg>
<div class="t" style="top:222px;font-size:18.20px;color:#333;transform:scaleY(1.08);transform-origin:0 15.41px;left:647.60px;">Rows</div>
<div class="r" style="left:753px;top:162.5px;width:234.5px;height:31.30000000000001px;background:#4a96b5;border-radius:15.650000000000006px;"></div>
<div class="t" style="top:171px;font-size:18.80px;color:#ffffff;transform:scaleY(1.08);transform-origin:0 15.92px;left:771.30px;">Measure Names</div>
<div class="r" style="left:753px;top:215.8px;width:234.5px;height:31.0px;background:#4a96b5;border-radius:15.5px;"></div>
<div class="t" style="top:223px;font-size:19.10px;color:#ffffff;transform:scaleY(1.08);transform-origin:0 16.17px;left:771.30px;">Product Line</div>
<div class="r" style="left:992.5px;top:215.8px;width:233.79999999999995px;height:31.0px;background:#4a96b5;border-radius:15.5px;"></div>
<div class="t" style="top:223px;font-size:19.60px;color:#ffffff;transform:scaleY(1.08);transform-origin:0 16.60px;left:1010.00px;">Product</div>
<div class="r" style="left:609px;top:262px;width:1382px;height:779px;background:#ffffff;border:2px solid #d9d9d9;box-sizing:border-box;"></div>
<div class="t" style="top:287px;font-size:31.50px;color:#333;transform:scaleY(1.08);transform-origin:0 26.67px;left:623.40px;">Sheet 2</div>
<div class="t" style="top:346px;font-size:17.80px;color:#3a3a3a;transform:scaleY(1.08);transform-origin:0 15.07px;font-weight:700;left:626.20px;">Product Line</div>
<div class="t" style="top:345px;font-size:18.30px;color:#3a3a3a;transform:scaleY(1.08);transform-origin:0 15.49px;font-weight:700;left:751.00px;">Product</div>
<div class="t" style="top:345px;font-size:18.10px;color:#3a3a3a;transform:scaleY(1.08);transform-origin:0 15.33px;font-weight:700;right:757.00px;">Sales Amount</div>
<div class="t" style="top:345px;font-size:18.30px;color:#3a3a3a;transform:scaleY(1.08);transform-origin:0 15.49px;font-weight:700;right:591.60px;">Sales Margin % ..</div>
<div class="t" style="top:345px;font-size:18.50px;color:#3a3a3a;transform:scaleY(1.08);transform-origin:0 15.66px;font-weight:700;right:425.70px;">Sales Quantity</div>
<div class="r" style="left:612px;top:369px;width:1000px;height:664px;overflow:hidden;">
<div class="r" style="left:129px;top:31.24000000000001px;width:840px;height:31.24000000000001px;background:#f4f4f4;"></div>
<div class="r" style="left:129px;top:93.72000000000003px;width:840px;height:31.24000000000001px;background:#f4f4f4;"></div>
<div class="r" style="left:129px;top:156.20000000000005px;width:840px;height:31.24000000000001px;background:#f4f4f4;"></div>
<div class="r" style="left:129px;top:218.67999999999995px;width:840px;height:31.24000000000001px;background:#f4f4f4;"></div>
<div class="r" style="left:129px;top:281.15999999999997px;width:840px;height:31.24000000000001px;background:#f4f4f4;"></div>
<div class="r" style="left:129px;top:343.64px;width:840px;height:31.24000000000001px;background:#f4f4f4;"></div>
<div class="r" style="left:129px;top:406.12px;width:840px;height:31.24000000000001px;background:#f4f4f4;"></div>
<div class="r" style="left:129px;top:468.5999999999999px;width:840px;height:31.24000000000001px;background:#f4f4f4;"></div>
<div class="r" style="left:129px;top:531.0799999999999px;width:840px;height:31.24000000000001px;background:#f4f4f4;"></div>
<div class="r" style="left:129px;top:593.56px;width:840px;height:31.24000000000001px;background:#f4f4f4;"></div>
<div class="r" style="left:129px;top:656.04px;width:840px;height:31.24000000000001px;background:#f4f4f4;"></div>
<div class="r" style="left:472.5px;top:-33px;width:1.5px;height:704px;background:#d0d0d0;"></div>
<div class="r" style="left:969px;top:-33px;width:2px;height:704px;background:#d0d0d0;"></div>
<div class="t" style="left:139px;top:6px;font-size:19.6px;color:#666;width:333px;overflow:hidden;transform:scaleY(1.08);transform-origin:0 16.60px;">Atlantic Metals Mobile 5-Shelf Bookc..</div>
<div class="t" style="right:369.00px;top:6px;font-size:19.6px;color:#555;transform:scaleY(1.08);transform-origin:0 16.60px;">142,623</div>
<div class="t" style="right:37.70px;top:6px;font-size:19.6px;color:#555;transform:scaleY(1.08);transform-origin:0 16.60px;">228</div>
<div class="t" style="left:139px;top:37px;font-size:19.6px;color:#666;width:333px;overflow:hidden;transform:scaleY(1.08);transform-origin:0 16.60px;">Bevis Steel Folding Chairs</div>
<div class="t" style="right:369.00px;top:37px;font-size:19.6px;color:#555;transform:scaleY(1.08);transform-origin:0 16.60px;">91,608</div>
<div class="t" style="right:203.60px;top:37px;font-size:19.6px;color:#555;transform:scaleY(1.08);transform-origin:0 16.60px;">+3.0%</div>
<svg class="r" style="left:724.7796875000001px;top:36.94px;" width="16" height="17" viewBox="0 0 16 17"><path d="M7.5 0.5 L15 16 H0 Z" fill="#333"/></svg>
<div class="t" style="right:37.70px;top:37px;font-size:19.6px;color:#555;transform:scaleY(1.08);transform-origin:0 16.60px;">165</div>
<div class="t" style="left:139px;top:68px;font-size:19.6px;color:#666;width:333px;overflow:hidden;transform:scaleY(1.08);transform-origin:0 16.60px;">Bush Andora Bookcase, Maple/Grap..</div>
<div class="t" style="right:369.00px;top:68px;font-size:19.6px;color:#555;transform:scaleY(1.08);transform-origin:0 16.60px;">51,647</div>
<div class="t" style="right:203.60px;top:68px;font-size:19.6px;color:#555;transform:scaleY(1.08);transform-origin:0 16.60px;">-55.5%</div>
<svg class="r" style="left:718.8016875000001px;top:68.18px;" width="16" height="17" viewBox="0 0 16 17"><path d="M0 0.5 H15 L7.5 16 Z" fill="#333"/></svg>
<div class="t" style="right:37.70px;top:68px;font-size:19.6px;color:#555;transform:scaleY(1.08);transform-origin:0 16.60px;">111</div>
<div class="t" style="left:139px;top:99px;font-size:19.6px;color:#666;width:333px;overflow:hidden;transform:scaleY(1.08);transform-origin:0 16.60px;">DMI Arturo Collection Mission-style ..</div>
<div class="t" style="right:369.00px;top:99px;font-size:19.6px;color:#555;transform:scaleY(1.08);transform-origin:0 16.60px;">19,776</div>
<div class="t" style="right:203.60px;top:99px;font-size:19.6px;color:#555;transform:scaleY(1.08);transform-origin:0 16.60px;">+27.9%</div>
<svg class="r" style="left:713.8802500000002px;top:99.41999999999996px;" width="16" height="17" viewBox="0 0 16 17"><path d="M7.5 0.5 L15 16 H0 Z" fill="#333"/></svg>
<div class="t" style="right:37.70px;top:99px;font-size:19.6px;color:#555;transform:scaleY(1.08);transform-origin:0 16.60px;">39</div>
<div class="t" style="left:139px;top:131px;font-size:19.6px;color:#666;width:333px;overflow:hidden;transform:scaleY(1.08);transform-origin:0 16.60px;">Global Adaptabilites Bookcase, Cher..</div>
<div class="t" style="right:369.00px;top:131px;font-size:19.6px;color:#555;transform:scaleY(1.08);transform-origin:0 16.60px;">42,998</div>
<div class="t" style="right:203.60px;top:131px;font-size:19.6px;color:#555;transform:scaleY(1.08);transform-origin:0 16.60px;">+54.0%</div>
<svg class="r" style="left:713.8802500000002px;top:130.65999999999997px;" width="16" height="17" viewBox="0 0 16 17"><path d="M7.5 0.5 L15 16 H0 Z" fill="#333"/></svg>
<div class="t" style="right:37.70px;top:131px;font-size:19.6px;color:#555;transform:scaleY(1.08);transform-origin:0 16.60px;">123</div>
<div class="t" style="left:139px;top:162px;font-size:19.6px;color:#666;width:333px;overflow:hidden;transform:scaleY(1.08);transform-origin:0 16.60px;">Global Wood Trimmed Manager’s Ta..</div>
<div class="t" style="right:369.00px;top:162px;font-size:19.6px;color:#555;transform:scaleY(1.08);transform-origin:0 16.60px;">730,932</div>
<div class="t" style="right:203.60px;top:162px;font-size:19.6px;color:#555;transform:scaleY(1.08);transform-origin:0 16.60px;">-54.1%</div>
<svg class="r" style="left:718.8016875000001px;top:161.89999999999998px;" width="16" height="17" viewBox="0 0 16 17"><path d="M0 0.5 H15 L7.5 16 Z" fill="#333"/></svg>
<div class="t" style="right:37.70px;top:162px;font-size:19.6px;color:#555;transform:scaleY(1.08);transform-origin:0 16.60px;">1,482</div>
<div class="t" style="left:139px;top:193px;font-size:19.6px;color:#666;width:333px;overflow:hidden;transform:scaleY(1.08);transform-origin:0 16.60px;">GuestStacker Chair with Chrome Fini..</div>
<div class="t" style="right:369.00px;top:193px;font-size:19.6px;color:#555;transform:scaleY(1.08);transform-origin:0 16.60px;">50,658</div>
<div class="t" style="right:203.60px;top:193px;font-size:19.6px;color:#555;transform:scaleY(1.08);transform-origin:0 16.60px;">+230.1%</div>
<svg class="r" style="left:702.9808125000002px;top:193.14px;" width="16" height="17" viewBox="0 0 16 17"><path d="M7.5 0.5 L15 16 H0 Z" fill="#333"/></svg>
<div class="t" style="right:37.70px;top:193px;font-size:19.6px;color:#555;transform:scaleY(1.08);transform-origin:0 16.60px;">90</div>
<div class="t" style="left:139px;top:224px;font-size:19.6px;color:#666;width:333px;overflow:hidden;transform:scaleY(1.08);transform-origin:0 16.60px;">Harbour Creations 67200 Series Sta..</div>
<div class="t" style="right:369.00px;top:224px;font-size:19.6px;color:#555;transform:scaleY(1.08);transform-origin:0 16.60px;">63,792</div>
<div class="t" style="right:203.60px;top:224px;font-size:19.6px;color:#555;transform:scaleY(1.08);transform-origin:0 16.60px;">-44.4%</div>
<svg class="r" style="left:718.8016875000001px;top:224.38px;" width="16" height="17" viewBox="0 0 16 17"><path d="M0 0.5 H15 L7.5 16 Z" fill="#333"/></svg>
<div class="t" style="right:37.70px;top:224px;font-size:19.6px;color:#555;transform:scaleY(1.08);transform-origin:0 16.60px;">93</div>
<div class="t" style="left:139px;top:256px;font-size:19.6px;color:#666;width:333px;overflow:hidden;transform:scaleY(1.08);transform-origin:0 16.60px;">High-Back Leather Manager’s Chair</div>
<div class="t" style="right:369.00px;top:256px;font-size:19.6px;color:#555;transform:scaleY(1.08);transform-origin:0 16.60px;">33,817</div>
<div class="t" style="right:203.60px;top:256px;font-size:19.6px;color:#555;transform:scaleY(1.08);transform-origin:0 16.60px;">+47.2%</div>
<svg class="r" style="left:713.8802500000002px;top:255.62px;" width="16" height="17" viewBox="0 0 16 17"><path d="M7.5 0.5 L15 16 H0 Z" fill="#333"/></svg>
<div class="t" style="right:37.70px;top:256px;font-size:19.6px;color:#555;transform:scaleY(1.08);transform-origin:0 16.60px;">93</div>
<div class="t" style="left:139px;top:287px;font-size:19.6px;color:#666;width:333px;overflow:hidden;transform:scaleY(1.08);transform-origin:0 16.60px;">Hon 2090 “Pillow Soft” Series Mid B..</div>
<div class="t" style="right:369.00px;top:287px;font-size:19.6px;color:#555;transform:scaleY(1.08);transform-origin:0 16.60px;">698,253</div>
<div class="t" style="right:203.60px;top:287px;font-size:19.6px;color:#555;transform:scaleY(1.08);transform-origin:0 16.60px;">-63.6%</div>
<svg class="r" style="left:718.8016875000001px;top:286.8599999999999px;" width="16" height="17" viewBox="0 0 16 17"><path d="M0 0.5 H15 L7.5 16 Z" fill="#333"/></svg>
<div class="t" style="right:37.70px;top:287px;font-size:19.6px;color:#555;transform:scaleY(1.08);transform-origin:0 16.60px;">1,473</div>
<div class="t" style="left:139px;top:318px;font-size:19.6px;color:#666;width:333px;overflow:hidden;transform:scaleY(1.08);transform-origin:0 16.60px;">Hon 4070 Series Pagoda Armless Up..</div>
<div class="t" style="right:369.00px;top:318px;font-size:19.6px;color:#555;transform:scaleY(1.08);transform-origin:0 16.60px;">45,345</div>
<div class="t" style="right:203.60px;top:318px;font-size:19.6px;color:#555;transform:scaleY(1.08);transform-origin:0 16.60px;">+55.6%</div>
<svg class="r" style="left:713.8802500000002px;top:318.0999999999999px;" width="16" height="17" viewBox="0 0 16 17"><path d="M7.5 0.5 L15 16 H0 Z" fill="#333"/></svg>
<div class="t" style="right:37.70px;top:318px;font-size:19.6px;color:#555;transform:scaleY(1.08);transform-origin:0 16.60px;">87</div>
<div class="t" style="left:139px;top:349px;font-size:19.6px;color:#666;width:333px;overflow:hidden;transform:scaleY(1.08);transform-origin:0 16.60px;">Hon Deluxe Fabric Upholstered Stac..</div>
<div class="t" style="right:369.00px;top:349px;font-size:19.6px;color:#555;transform:scaleY(1.08);transform-origin:0 16.60px;">96,526</div>
<div class="t" style="right:203.60px;top:349px;font-size:19.6px;color:#555;transform:scaleY(1.08);transform-origin:0 16.60px;">+84.3%</div>
<svg class="r" style="left:713.8802500000002px;top:349.3399999999999px;" width="16" height="17" viewBox="0 0 16 17"><path d="M7.5 0.5 L15 16 H0 Z" fill="#333"/></svg>
<div class="t" style="right:37.70px;top:349px;font-size:19.6px;color:#555;transform:scaleY(1.08);transform-origin:0 16.60px;">171</div>
<div class="t" style="left:139px;top:381px;font-size:19.6px;color:#666;width:333px;overflow:hidden;transform:scaleY(1.08);transform-origin:0 16.60px;">Hon Every-Day Series Multi-Task Cha..</div>
<div class="t" style="right:369.00px;top:381px;font-size:19.6px;color:#555;transform:scaleY(1.08);transform-origin:0 16.60px;">44,770</div>
<div class="t" style="right:203.60px;top:381px;font-size:19.6px;color:#555;transform:scaleY(1.08);transform-origin:0 16.60px;">-14.3%</div>
<svg class="r" style="left:718.8016875000001px;top:380.5799999999999px;" width="16" height="17" viewBox="0 0 16 17"><path d="M0 0.5 H15 L7.5 16 Z" fill="#333"/></svg>
<div class="t" style="right:37.70px;top:381px;font-size:19.6px;color:#555;transform:scaleY(1.08);transform-origin:0 16.60px;">99</div>
<div class="t" style="left:139px;top:412px;font-size:19.6px;color:#666;width:333px;overflow:hidden;transform:scaleY(1.08);transform-origin:0 16.60px;">Lifetime Advantage Folding Chairs, 4..</div>
<div class="t" style="right:369.00px;top:412px;font-size:19.6px;color:#555;transform:scaleY(1.08);transform-origin:0 16.60px;">195,292</div>
<div class="t" style="right:203.60px;top:412px;font-size:19.6px;color:#555;transform:scaleY(1.08);transform-origin:0 16.60px;">-32.4%</div>
<svg class="r" style="left:718.8016875000001px;top:411.81999999999994px;" width="16" height="17" viewBox="0 0 16 17"><path d="M0 0.5 H15 L7.5 16 Z" fill="#333"/></svg>
<div class="t" style="right:37.70px;top:412px;font-size:19.6px;color:#555;transform:scaleY(1.08);transform-origin:0 16.60px;">327</div>
<div class="t" style="left:139px;top:443px;font-size:19.6px;color:#666;width:333px;overflow:hidden;transform:scaleY(1.08);transform-origin:0 16.60px;">Metal Folding Chairs, Beige, 4/Carton</div>
<div class="t" style="right:369.00px;top:443px;font-size:19.6px;color:#555;transform:scaleY(1.08);transform-origin:0 16.60px;">28,035</div>
<div class="t" style="right:203.60px;top:443px;font-size:19.6px;color:#555;transform:scaleY(1.08);transform-origin:0 16.60px;">+37.1%</div>
<svg class="r" style="left:713.8802500000002px;top:443.05999999999995px;" width="16" height="17" viewBox="0 0 16 17"><path d="M7.5 0.5 L15 16 H0 Z" fill="#333"/></svg>
<div class="t" style="right:37.70px;top:443px;font-size:19.6px;color:#555;transform:scaleY(1.08);transform-origin:0 16.60px;">90</div>
<div class="t" style="left:139px;top:474px;font-size:19.6px;color:#666;width:333px;overflow:hidden;transform:scaleY(1.08);transform-origin:0 16.60px;">50 Colored Long Pencils</div>
<div class="t" style="right:369.00px;top:474px;font-size:19.6px;color:#555;transform:scaleY(1.08);transform-origin:0 16.60px;">25,871</div>
<div class="t" style="right:203.60px;top:474px;font-size:19.6px;color:#555;transform:scaleY(1.08);transform-origin:0 16.60px;">+11.0%</div>
<svg class="r" style="left:715.3349375px;top:474.29999999999995px;" width="16" height="17" viewBox="0 0 16 17"><path d="M7.5 0.5 L15 16 H0 Z" fill="#333"/></svg>
<div class="t" style="right:37.70px;top:474px;font-size:19.6px;color:#555;transform:scaleY(1.08);transform-origin:0 16.60px;">78</div>
<div class="t" style="left:139px;top:506px;font-size:19.6px;color:#666;width:333px;overflow:hidden;transform:scaleY(1.08);transform-origin:0 16.60px;">4009 Highlighters by Sanford</div>
<div class="t" style="right:369.00px;top:506px;font-size:19.6px;color:#555;transform:scaleY(1.08);transform-origin:0 16.60px;">56,280</div>
<div class="t" style="right:203.60px;top:506px;font-size:19.6px;color:#555;transform:scaleY(1.08);transform-origin:0 16.60px;">+25.3%</div>
<svg class="r" style="left:713.8802500000002px;top:505.53999999999996px;" width="16" height="17" viewBox="0 0 16 17"><path d="M7.5 0.5 L15 16 H0 Z" fill="#333"/></svg>
<div class="t" style="right:37.70px;top:506px;font-size:19.6px;color:#555;transform:scaleY(1.08);transform-origin:0 16.60px;">66</div>
<div class="t" style="left:139px;top:537px;font-size:19.6px;color:#666;width:333px;overflow:hidden;transform:scaleY(1.08);transform-origin:0 16.60px;">American Pencil</div>
<div class="t" style="right:369.00px;top:537px;font-size:19.6px;color:#555;transform:scaleY(1.08);transform-origin:0 16.60px;">68,337</div>
<div class="t" style="right:203.60px;top:537px;font-size:19.6px;color:#555;transform:scaleY(1.08);transform-origin:0 16.60px;">-26.8%</div>
<svg class="r" style="left:718.8016875000001px;top:536.78px;" width="16" height="17" viewBox="0 0 16 17"><path d="M0 0.5 H15 L7.5 16 Z" fill="#333"/></svg>
<div class="t" style="right:37.70px;top:537px;font-size:19.6px;color:#555;transform:scaleY(1.08);transform-origin:0 16.60px;">249</div>
<div class="t" style="left:139px;top:568px;font-size:19.6px;color:#666;width:333px;overflow:hidden;transform:scaleY(1.08);transform-origin:0 16.60px;">Avery Fluorescent Highlighter Four-..</div>
<div class="t" style="right:369.00px;top:568px;font-size:19.6px;color:#555;transform:scaleY(1.08);transform-origin:0 16.60px;">48,813</div>
<div class="t" style="right:203.60px;top:568px;font-size:19.6px;color:#555;transform:scaleY(1.08);transform-origin:0 16.60px;">-28.9%</div>
<svg class="r" style="left:718.8016875000001px;top:568.02px;" width="16" height="17" viewBox="0 0 16 17"><path d="M0 0.5 H15 L7.5 16 Z" fill="#333"/></svg>
<div class="t" style="right:37.70px;top:568px;font-size:19.6px;color:#555;transform:scaleY(1.08);transform-origin:0 16.60px;">153</div>
<div class="t" style="left:139px;top:599px;font-size:19.6px;color:#666;width:333px;overflow:hidden;transform:scaleY(1.08);transform-origin:0 16.60px;">Avery Non-Stick Binders</div>
<div class="t" style="right:369.00px;top:599px;font-size:19.6px;color:#555;transform:scaleY(1.08);transform-origin:0 16.60px;">164,600</div>
<div class="t" style="right:203.60px;top:599px;font-size:19.6px;color:#555;transform:scaleY(1.08);transform-origin:0 16.60px;">+38.2%</div>
<svg class="r" style="left:713.8802500000002px;top:599.26px;" width="16" height="17" viewBox="0 0 16 17"><path d="M7.5 0.5 L15 16 H0 Z" fill="#333"/></svg>
<div class="t" style="right:37.70px;top:599px;font-size:19.6px;color:#555;transform:scaleY(1.08);transform-origin:0 16.60px;">363</div>
<div class="t" style="left:139px;top:631px;font-size:19.6px;color:#666;width:333px;overflow:hidden;transform:scaleY(1.08);transform-origin:0 16.60px;">BIC Brite Liner Highlighters</div>
<div class="t" style="right:369.00px;top:631px;font-size:19.6px;color:#555;transform:scaleY(1.08);transform-origin:0 16.60px;">8,379</div>
<div class="t" style="right:203.60px;top:631px;font-size:19.6px;color:#555;transform:scaleY(1.08);transform-origin:0 16.60px;">-21.5%</div>
<svg class="r" style="left:718.8016875000001px;top:630.5px;" width="16" height="17" viewBox="0 0 16 17"><path d="M0 0.5 H15 L7.5 16 Z" fill="#333"/></svg>
<div class="t" style="right:37.70px;top:631px;font-size:19.6px;color:#555;transform:scaleY(1.08);transform-origin:0 16.60px;">15</div>
<div class="t" style="right:369.00px;top:662px;font-size:19.6px;color:#555;transform:scaleY(1.08);transform-origin:0 16.60px;">47,486</div>
<div class="t" style="right:203.60px;top:662px;font-size:19.6px;color:#555;transform:scaleY(1.08);transform-origin:0 16.60px;">+50.0%</div>
<svg class="r" style="left:713.8802500000002px;top:661.74px;" width="16" height="17" viewBox="0 0 16 17"><path d="M7.5 0.5 L15 16 H0 Z" fill="#333"/></svg>
<div class="t" style="right:37.70px;top:662px;font-size:19.6px;color:#555;transform:scaleY(1.08);transform-origin:0 16.60px;">105</div>
</div>
<svg class="r" style="left:612px;top:360px;" width="1000" height="680" viewBox="0 0 1000 680"><path d="M4 8.20 H969" stroke="#7aa5ce" stroke-width="1.6"/><path d="M129 39.44 H969" stroke="#7aa5ce" stroke-width="1.6"/><path d="M129 70.68 H969" stroke="#7aa5ce" stroke-width="1.6"/><path d="M129 101.92 H969" stroke="#7aa5ce" stroke-width="1.6"/><path d="M129 133.16 H969" stroke="#7aa5ce" stroke-width="1.6"/><path d="M129 164.40 H969" stroke="#7aa5ce" stroke-width="1.6"/><path d="M129 195.64 H969" stroke="#7aa5ce" stroke-width="1.6"/><path d="M129 226.88 H969" stroke="#7aa5ce" stroke-width="1.6"/><path d="M129 258.12 H969" stroke="#7aa5ce" stroke-width="1.6"/><path d="M129 289.36 H969" stroke="#7aa5ce" stroke-width="1.6"/><path d="M129 320.60 H969" stroke="#7aa5ce" stroke-width="1.6"/><path d="M129 351.84 H969" stroke="#7aa5ce" stroke-width="1.6"/><path d="M129 383.08 H969" stroke="#7aa5ce" stroke-width="1.6"/><path d="M129 414.32 H969" stroke="#7aa5ce" stroke-width="1.6"/><path d="M129 445.56 H969" stroke="#7aa5ce" stroke-width="1.6"/><path d="M4 476.80 H969" stroke="#7aa5ce" stroke-width="1.6"/><path d="M129 508.04 H969" stroke="#7aa5ce" stroke-width="1.6"/><path d="M129 539.28 H969" stroke="#7aa5ce" stroke-width="1.6"/><path d="M129 570.52 H969" stroke="#7aa5ce" stroke-width="1.6"/><path d="M129 601.76 H969" stroke="#7aa5ce" stroke-width="1.6"/><path d="M129 633.00 H969" stroke="#7aa5ce" stroke-width="1.6"/><path d="M129 664.24 H969" stroke="#7aa5ce" stroke-width="1.6"/><path d="M4 673.80 H969" stroke="#b3c9df" stroke-width="1.6"/></svg>
<div class="r" style="left:1583px;top:367px;width:25px;height:667px;background:#f3f3f3;"></div>
<div class="r" style="left:1583px;top:367px;width:25px;height:309px;background:#dedede;"></div>
<div class="r" style="left:1581px;top:1033px;width:2px;height:2px;background:#d0d0d0;"></div>
<div class="r" style="left:1084.5px;top:336px;width:1.5px;height:33px;background:#d0d0d0;"></div>
<div class="r" style="left:1581px;top:336px;width:2px;height:33px;background:#d0d0d0;"></div>
<div class="t" style="top:374px;font-size:18.50px;color:#3a3a3a;transform:scaleY(1.08);transform-origin:0 15.66px;font-weight:700;left:626.20px;">Furniture</div>
<div class="t" style="top:843px;font-size:18.40px;color:#3a3a3a;transform:scaleY(1.08);transform-origin:0 15.58px;font-weight:700;left:625.70px;">Office</div>
<div class="t" style="top:870px;font-size:17.90px;color:#3a3a3a;transform:scaleY(1.08);transform-origin:0 15.16px;font-weight:700;left:625.70px;">Supplies</div>
<div class="r" style="left:0px;top:1050px;width:2000px;height:2px;background:#d2d2d2;"></div>
<div class="r" style="left:0px;top:1052px;width:2000px;height:45px;background:#e4e4e4;"></div>
<div class="r" style="left:0px;top:1097px;width:2000px;height:2px;background:#d2d2d2;"></div>
<div class="r" style="left:0px;top:1099px;width:2000px;height:26px;background:#ebebeb;"></div>
<div class="r" style="left:278.5px;top:1052px;width:90.0px;height:45px;background:#fafafa;"></div>
<div class="r" style="left:193px;top:1052px;width:1.5px;height:45px;background:#cacaca;"></div>
<div class="r" style="left:277px;top:1052px;width:1.5px;height:45px;background:#cacaca;"></div>
<div class="r" style="left:368px;top:1052px;width:1.5px;height:45px;background:#cacaca;"></div>
<div class="r" style="left:455.5px;top:1052px;width:1.5px;height:45px;background:#cacaca;"></div>
<div class="r" style="left:568px;top:1052px;width:1.5px;height:45px;background:#cacaca;"></div>
<div class="r" style="left:656px;top:1052px;width:1.5px;height:45px;background:#cacaca;"></div>
<div class="r" style="left:815px;top:1052px;width:1.5px;height:45px;background:#cacaca;"></div>
<div class="r" style="left:904px;top:1052px;width:1.5px;height:45px;background:#cacaca;"></div>
<div class="r" style="left:954px;top:1052px;width:1.5px;height:45px;background:#cacaca;"></div>
<div class="r" style="left:1004px;top:1052px;width:1.5px;height:45px;background:#cacaca;"></div>
<div class="r" style="left:1054px;top:1052px;width:1.5px;height:45px;background:#cacaca;"></div>
<svg class="r" style="left:15px;top:1063px;" width="17" height="20" viewBox="0 0 17 20"><ellipse cx="8" cy="4.5" rx="6.3" ry="3.2" fill="none" stroke="#666" stroke-width="1.5"/><path d="M1.7 4.5 V15.5 A6.3 3.2 0 0 0 14.3 15.5 V4.5" fill="none" stroke="#666" stroke-width="1.5"/></svg>
<div class="t" style="top:1063px;font-size:18.60px;color:#666;transform:scaleY(1.08);transform-origin:0 15.75px;left:40.20px;">Data Source</div>
<div class="t" style="top:1064px;font-size:17.70px;color:#666;transform:scaleY(1.08);transform-origin:0 14.99px;left:206.00px;">Sheet 1</div>
<div class="t" style="top:1063px;font-size:18.80px;color:#222;transform:scaleY(1.08);transform-origin:0 15.92px;font-weight:700;left:291.00px;">Sheet 2</div>
<div class="t" style="top:1063px;font-size:18.70px;color:#666;transform:scaleY(1.08);transform-origin:0 15.83px;left:381.00px;">Sheet 3</div>
<svg class="r" style="left:471px;top:1062px;" width="21" height="20" viewBox="0 0 21 20"><path d="M2.1 1.9 V15.6 L10.25 18.1 L18.4 15.6 V1.9 L10.25 4.4 Z M10.25 4.4 V18.1" fill="none" stroke="#666" stroke-width="1.6" stroke-linejoin="round"/></svg>
<div class="t" style="top:1063px;font-size:18.30px;color:#666;transform:scaleY(1.08);transform-origin:0 15.49px;left:500.00px;">Story 1</div>
<div class="t" style="top:1063px;font-size:18.90px;color:#666;transform:scaleY(1.08);transform-origin:0 16.00px;left:581.00px;">Sheet 4</div>
<svg class="r" style="left:671px;top:1062px;" width="20" height="20" viewBox="0 0 20 20"><rect x="1.5" y="1.5" width="16.5" height="16" rx="1.5" fill="none" stroke="#666" stroke-width="1.6"/><path d="M9.75 1.5 V17.5 M1.5 9.5 H18" stroke="#666" stroke-width="1.6"/></svg>
<div class="t" style="top:1063px;font-size:18.30px;color:#666;transform:scaleY(1.08);transform-origin:0 15.49px;left:700.60px;">Dashboard 1</div>
<div class="t" style="top:1063px;font-size:18.70px;color:#666;transform:scaleY(1.08);transform-origin:0 15.83px;left:828.20px;">Sheet 5</div>
<svg class="r" style="left:918px;top:1060px;" width="27" height="26" viewBox="0 0 27 26"><path d="M18.2 9.2 V3 Q18.2 1.9 17 1.9 H3.2 Q2 1.9 2 3 V16.5 Q2 17.6 3.2 17.6 H10.4" fill="none" stroke="#666" stroke-width="1.7"/><path d="M6.4 13.2 V11 M10 13.2 V6.2 M13.2 13.2 V7.2" stroke="#666" stroke-width="1.5"/><path d="M18.6 12.4 V24 M12.8 18 H24.8" stroke="#666" stroke-width="3"/></svg>
<svg class="r" style="left:968px;top:1060px;" width="27" height="26" viewBox="0 0 27 26"><path d="M10 17.6 H3.2 Q2 17.6 2 16.5 V3 Q2 1.9 3.2 1.9 H17 Q18.2 1.9 18.2 3 V8.2 Q18.2 9.2 17 9.2 H2 M10 1.9 V17.6" fill="none" stroke="#666" stroke-width="1.7"/><path d="M18.4 12.4 V24 M12.6 18 H24.4" stroke="#666" stroke-width="3"/></svg>
<svg class="r" style="left:1018px;top:1060px;" width="27" height="26" viewBox="0 0 27 26"><path d="M2 2 V15.2 L10 18.8 V5.2 Z M10 5.2 L17.6 2 V9.6" fill="none" stroke="#666" stroke-width="1.7" stroke-linejoin="round"/><path d="M18.8 12.4 V24 M13 18 H24.8" stroke="#666" stroke-width="3"/></svg>
<div class="t" style="top:1105px;font-size:15.70px;color:#333;transform:scaleY(1.08);transform-origin:0 13.29px;left:15.70px;">138 marks</div>
<div class="t" style="top:1105px;font-size:15.90px;color:#333;transform:scaleY(1.08);transform-origin:0 13.46px;left:108.70px;">46 rows by 3 columns</div>
<div class="t" style="top:1105px;font-size:15.50px;color:#333;transform:scaleY(1.08);transform-origin:0 13.12px;left:282.40px;">SUM of Measure Values: 5,062,125</div>
</body></html>
